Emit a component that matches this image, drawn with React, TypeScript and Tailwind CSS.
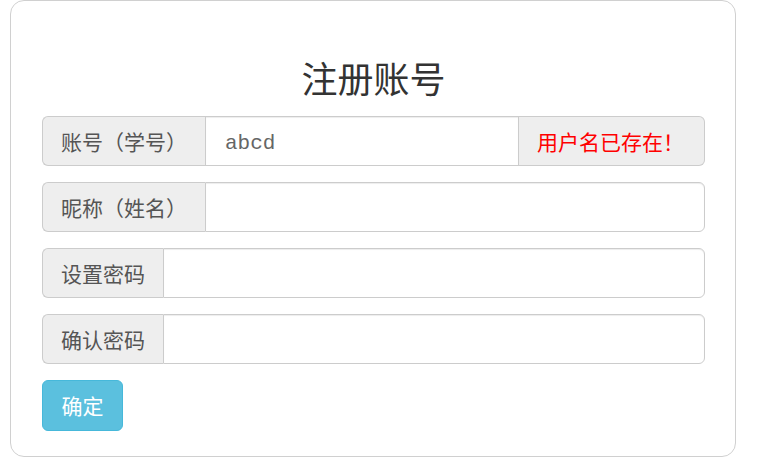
import React from 'react';

type FieldRowProps = {
  label: string;
  labelWidth: string;
  value?: string;
  error?: string;
};

const cjk = "font-['Noto_Sans_CJK_SC','Microsoft_YaHei',sans-serif]";

const FieldRow: React.FC<FieldRowProps> = ({ label, labelWidth, value, error }) => {
  return (
    <div className="flex h-[50px]">
      <div
        className={`flex items-center ${labelWidth} shrink-0 rounded-l-[6px] border border-r-0 border-[#ccc] bg-[#eee] pl-[18px] text-[21px] leading-none text-[#555] ${cjk}`}
      >
        {label}
      </div>
      <div
        className={`flex flex-1 items-center border border-[#ccc] bg-white pl-[19px] shadow-[inset_0_1px_1px_rgba(0,0,0,0.075)] ${
          error ? '' : 'rounded-r-[6px]'
        }`}
      >
        {value && (
          <span className="pt-[4px] font-['Liberation_Mono',monospace] text-[21px] leading-none text-[#666]">
            {value}
          </span>
        )}
      </div>
      {error && (
        <div
          className={`flex w-[186px] shrink-0 items-center rounded-r-[6px] border border-l-0 border-[#ccc] bg-[#eee] pl-[18px] text-[21px] leading-none text-[#ff0000] ${cjk}`}
        >
          {error}
        </div>
      )}
    </div>
  );
};

const App: React.FC = () => {
  return (
    <div className="h-[457px] w-[759px] overflow-hidden bg-white">
      <div className="ml-[10px] w-[726px] rounded-[14px] border border-[#d0d0d0] pt-[56px] pr-[30px] pb-[25px] pl-[31px]">
        <h1 className={`mb-[19px] text-center text-[36px] leading-[40px] font-normal text-[#333] ${cjk}`}>
          注册账号
        </h1>
        <div className="flex flex-col gap-[16px]">
          <FieldRow label="账号（学号）" labelWidth="w-[163px]" value="abcd" error="用户名已存在！" />
          <FieldRow label="昵称（姓名）" labelWidth="w-[163px]" />
          <FieldRow label="设置密码" labelWidth="w-[121px]" />
          <FieldRow label="确认密码" labelWidth="w-[121px]" />
        </div>
        <button
          className={`mt-[16px] flex h-[51px] w-[81px] items-center justify-center rounded-[6px] border border-[#46b8da] bg-[#5bc0de] text-[21px] leading-none text-white ${cjk}`}
        >
          确定
        </button>
      </div>
    </div>
  );
};

export default App;
